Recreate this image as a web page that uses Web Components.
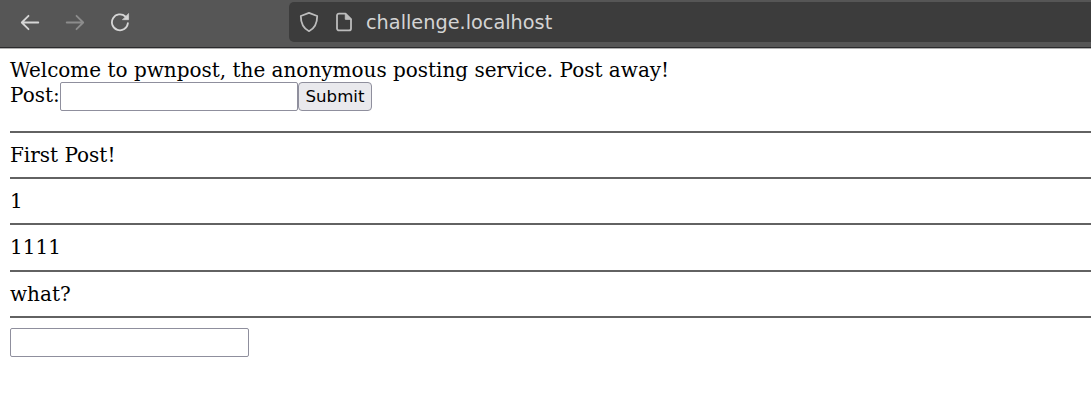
<!DOCTYPE html>
<html lang="en">
<head>
<meta charset="utf-8">
<title>challenge.localhost</title>
<style>
html, body { margin: 0; height: 100%; overflow: hidden; background: #fff; }
</style>
</head>
<body>
<pwn-window></pwn-window>
<script>
const define = (name, html) => customElements.define(name, class extends HTMLElement {
  constructor() {
    super();
    this.attachShadow({ mode: "open" }).innerHTML = html;
  }
});

define("browser-toolbar", `
<style>
:host { display: flex; height: 49px; box-sizing: border-box; background: #565656; border-bottom: 1px solid #b0b0b0; box-shadow: inset 0 -1px #2a2a2c; padding: 2px 0 6px 20px; }
nav { display: flex; align-items: center; gap: 25px; width: 269px; }
svg { display: block; flex: none; fill: none; stroke: #d6d6d6; stroke-width: 1.8; stroke-linecap: round; stroke-linejoin: round; }
.off { stroke: #8c8c8c; }
.address { flex: 1; display: flex; align-items: center; background: #3c3c3c; border-radius: 5px 0 0 5px; padding-left: 10px; color: #d4d4d4; font: 19.3px/40px "DejaVu Sans", sans-serif; }
.address svg { stroke: #bcbcbc; }
.page { margin: 0 13px 0 16px; }
span { padding-top: 2px; line-height: 38px; }
</style>
<nav>
<svg width="20" height="20" viewBox="0 0 20 20"><path d="M18.300 10.500H2M8.500 3.800 1.800 10.500l6.700 6.700"/></svg>
<svg class="off" width="20" height="20" viewBox="0 0 20 20"><path d="M1.700 10.500H18M11.500 3.800l6.700 6.700-6.700 6.700"/></svg>
<svg width="20" height="20" viewBox="0 0 20 20"><path d="M17.900 11.200A8 8 0 1 1 15.400 4.500"/><path fill="#d6d6d6" stroke-width=".6" d="M18.600 1.800v5.900h-5.900z"/></svg>
</nav>
<div class="address">
<svg width="20" height="22" viewBox="0 0 20 22"><path d="M10 1.800 18.200 5c0 6.200-1.700 12-8.200 15.200C3.500 17 1.800 11.200 1.800 5z"/></svg>
<svg class="page" width="18" height="20" viewBox="0 0 18 20"><path d="M4 1.600h6.500l5.500 5.500v9.300a2 2 0 0 1-2 2H4a2 2 0 0 1-2-2V3.600a2 2 0 0 1 2-2z"/><path fill="#bcbcbc" stroke-width="1" d="M10.300 1.800v5.500h5.500z"/></svg>
<span><slot></slot></span>
</div>`);

define("text-field", `
<style>
:host { display: block; width: 238px; height: 29px; flex: none; }
input { display: block; box-sizing: border-box; width: 100%; height: 100%; margin: 0; padding: 2px; border: 1px solid #8f8f9d; border-radius: 2px; background: #fff; font: 16px "DejaVu Sans", sans-serif; outline: 0; }
</style><input type="text">`);

define("submit-button", `
<style>
:host { display: block; width: 74px; height: 29px; flex: none; }
button { box-sizing: border-box; width: 100%; height: 100%; margin: 0; padding: 1px 0 0; border: 1px solid #8f8f9d; border-radius: 4px; background: #e9e9ed; color: #000; font: 16.6px/24px "DejaVu Sans", sans-serif; display: flex; justify-content: center; align-items: center; }
</style><button type="button"><slot></slot></button>`);

define("post-entry", `
<style>
:host { display: block; height: 46.2px; box-sizing: border-box; border-top: 2px solid #626262; padding-top: 10px; line-height: 25px; }
</style><slot></slot>`);

define("pwn-window", `
<style>
:host { display: block; height: 413px; overflow: hidden; color: #000; font: 19.99px/25px "DejaVu Serif", serif; }
main { padding: 9px 0 0 10px; }
p { margin: 0; height: 24px; white-space: nowrap; }
form { display: flex; height: 29px; margin: 0 0 20px; }
form > span { width: 50px; padding-top: 1px; white-space: nowrap; }
.last { height: 12.200px; padding: 0; }
main > text-field { width: 239px; }
</style>
<browser-toolbar>challenge.localhost</browser-toolbar>
<main>
<p>Welcome to pwnpost, the anonymous posting service. Post away!</p>
<form><span>Post:</span><text-field></text-field><submit-button>Submit</submit-button></form>
<post-entry>First Post!</post-entry>
<post-entry>1</post-entry>
<post-entry>1111</post-entry>
<post-entry>what?</post-entry>
<post-entry class="last"></post-entry>
<text-field></text-field>
</main>`);
</script>
</body>
</html>
